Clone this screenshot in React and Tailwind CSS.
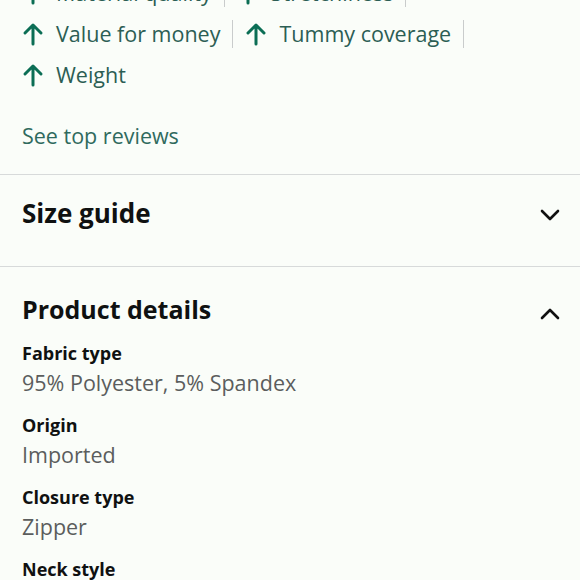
import React from 'react';

const ArrowUp = () => (
  <svg width="22" height="24" viewBox="0 0 22 24" className="shrink-0 text-[#0b6e55]">
    <path d="M11 22V4M3 11l8-8 8 8" fill="none" stroke="currentColor" strokeWidth="3" strokeLinecap="round" strokeLinejoin="round" />
  </svg>
);

const Chevron = ({ up }) => (
  <svg width="24" height="24" viewBox="0 0 24 24" className="text-[#111]">
    <path d={up ? 'M4 16l8-8 8 8' : 'M4 8l8 8 8-8'} fill="none" stroke="currentColor" strokeWidth="2.6" strokeLinecap="round" strokeLinejoin="round" />
  </svg>
);

const Tag = ({ label, sep = true }) => (
  <div className="flex items-center">
    <div className="flex items-center gap-3">
      <ArrowUp />
      <span>{label}</span>
    </div>
    {sep && <div className="w-px h-7 bg-[#c9cccc] mx-3" />}
  </div>
);

const details = [
  ['Fabric type', '95% Polyester, 5% Spandex'],
  ['Origin', 'Imported'],
  ['Closure type', 'Zipper'],
  ['Neck style', 'Pullover'],
];

export default function App() {
  return (
    <div className="w-[580px] h-[580px] overflow-hidden bg-[#fafdf9]" style={{ fontFamily: '"Open Sans", "Noto Sans", sans-serif' }}>
      <div className="px-[22px] -mt-[21px] text-[21.5px] text-[#2c5e54]">
        <div className="flex flex-col gap-[13px]">
          <div className="flex items-center h-[28px]">
            <Tag label="Material quality" />
            <Tag label="Stretchiness" />
          </div>
          <div className="flex items-center h-[28px]">
            <Tag label="Value for money" />
            <Tag label="Tummy coverage" />
          </div>
          <div className="flex items-center h-[28px]">
            <Tag label="Weight" sep={false} />
          </div>
        </div>
        <div className="mt-[31px] pb-[22px] text-[#2f6a5e]">See top reviews</div>
      </div>

      <div className="border-t border-[#d7dada] flex items-start justify-between pl-[22px] pr-[18px] h-[92px] pt-[22px]">
        <h2 className="text-[26px] leading-[32px] font-bold text-[#0f1111]">Size guide</h2>
        <div className="mt-[6px]"><Chevron /></div>
      </div>

      <div className="border-t border-[#d7dada] pl-[22px] pr-[18px] pt-[24px]">
        <div className="flex items-center justify-between">
          <h2 className="text-[25px] font-bold text-[#0f1111]">Product details</h2>
          <div className="mt-2"><Chevron up /></div>
        </div>
        <div className="mt-[9px] flex flex-col gap-[12px]">
          {details.map(([k, v]) => (
            <div key={k} className="flex flex-col leading-[30px]">
              <span className="text-[18px] font-bold text-[#0f1111]">{k}</span>
              <span className="text-[21.5px] text-[#5b5d5d]">{v}</span>
            </div>
          ))}
        </div>
      </div>
    </div>
  );
}
